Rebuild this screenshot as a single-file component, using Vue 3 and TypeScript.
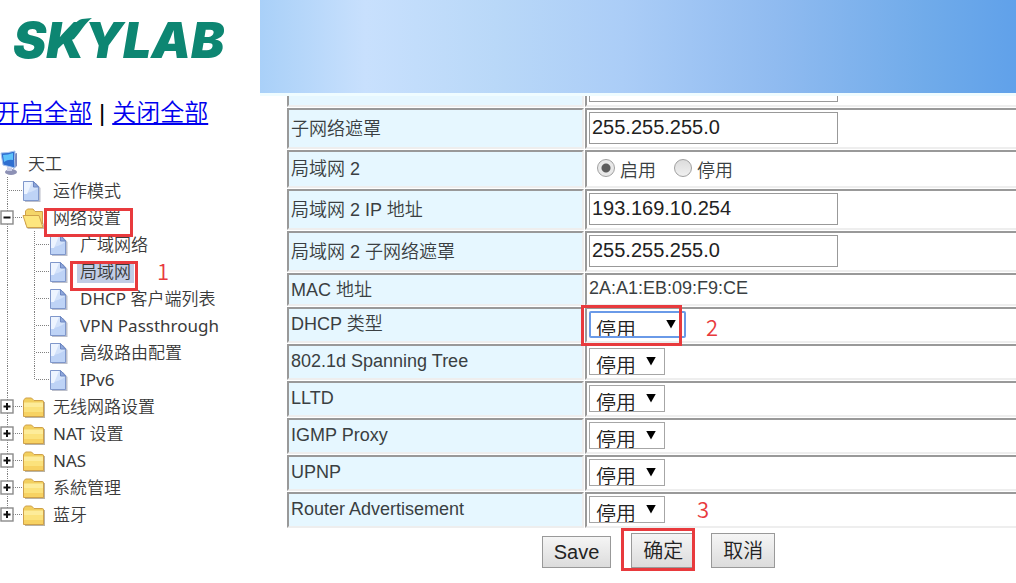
<script setup lang="ts">
import { ref } from 'vue'

type Icon = 'page' | 'folder' | 'open'

interface TreeRow {
  label: string
  level: 1 | 2
  icon: Icon
  toggle?: 'plus' | 'minus'
  last?: boolean
  selected?: boolean
  step?: string
  marked?: boolean
}

interface Option {
  id: string
  label: string
  value: string
  focused?: boolean
  step?: string
}

const tree: TreeRow[] = [
  { label: '运作模式', level: 1, icon: 'page' },
  { label: '网络设置', level: 1, icon: 'open', toggle: 'minus', marked: true },
  { label: '广域网络', level: 2, icon: 'page' },
  { label: '局域网', level: 2, icon: 'page', selected: true, marked: true, step: '1' },
  { label: 'DHCP 客户端列表', level: 2, icon: 'page' },
  { label: 'VPN Passthrough', level: 2, icon: 'page' },
  { label: '高级路由配置', level: 2, icon: 'page' },
  { label: 'IPv6', level: 2, icon: 'page', last: true },
  { label: '无线网路设置', level: 1, icon: 'folder', toggle: 'plus' },
  { label: 'NAT 设置', level: 1, icon: 'folder', toggle: 'plus' },
  { label: 'NAS', level: 1, icon: 'folder', toggle: 'plus' },
  { label: '系統管理', level: 1, icon: 'folder', toggle: 'plus' },
  { label: '蓝牙', level: 1, icon: 'folder', toggle: 'plus', last: true },
]

const ip = ref('')
const mask = ref('255.255.255.0')
const lan2 = ref('on')
const lan2Ip = ref('193.169.10.254')
const lan2Mask = ref('255.255.255.0')

const options = ref<Option[]>([
  { id: 'dhcp', label: 'DHCP 类型', value: '停用', focused: true, step: '2' },
  { id: 'stp', label: '802.1d Spanning Tree', value: '停用' },
  { id: 'lltd', label: 'LLTD', value: '停用' },
  { id: 'igmp', label: 'IGMP Proxy', value: '停用' },
  { id: 'upnp', label: 'UPNP', value: '停用' },
  { id: 'radv', label: 'Router Advertisement', value: '停用', step: '3' },
])
</script>

<template>
  <div class="page">
    <aside class="side">
      <div class="brand">
        <svg width="250" height="93" viewBox="0 0 250 93" role="img" aria-label="SKYLAB">
          <text class="logo" x="13" y="58">SKYLAB</text>
          <path d="M62 44 C70 29 76 20 82 19 L92 18 C85 23 82 30 74 39 Z" fill="#0d8672" />
        </svg>
      </div>
      <div class="all-links"><a href="#open">开启全部</a><span>|</span><a href="#close">关闭全部</a></div>

      <nav class="tree">
        <div class="row root">
          <svg class="pc" width="20" height="27" viewBox="0 0 20 27" aria-hidden="true">
            <ellipse cx="11" cy="22" rx="6" ry="3" fill="#8d91b5" />
            <path d="M13 4 L17 3 V16 L13 19 Z" fill="#7b87b8" />
            <path d="M1 3 Q8 3 15 1 Q14 9 15 18 L3 15 Z" fill="#2f6fd0" stroke="#a9c4ee" />
            <path d="M3 5 Q8 5 13 3 V10 Q8 9 4 12 Z" fill="#5fc3fa" />
            <path d="M7 17 L12 18 L12 21 L7 21 Z" fill="#c9cde6" />
          </svg>
          <a href="#root">天工</a>
        </div>
        <div v-for="r in tree" :key="r.label" class="row">
          <svg v-if="r.level === 2" width="27" height="27" aria-hidden="true">
            <path class="dots" d="M7.5 0 V27" />
          </svg>
          <svg width="22" height="27" viewBox="0 0 22 27" aria-hidden="true">
            <path class="dots" :d="r.last ? 'M7.5 0 V14' : 'M7.5 0 V27'" />
            <path class="dots" d="M9 13.5 H22" />
            <template v-if="r.toggle">
              <rect x="1" y="7" width="12" height="13" fill="#fff" stroke="#8a8a8a" stroke-width="1.4" />
              <path d="M3.500 13.5 H10.500" stroke="#111" stroke-width="2" />
              <path v-if="r.toggle === 'plus'" d="M7 10 V17" stroke="#111" stroke-width="2" />
            </template>
          </svg>
          <svg v-if="r.icon === 'page'" class="ico" width="24" height="27" viewBox="0 0 24 27" aria-hidden="true">
            <path d="M3 6 H14 L18.500 11 V25 H3 Z" fill="#8f95a8" opacity=".6" />
            <path d="M1.500 4.500 H11.500 L16.500 10 V23.500 H1.500 Z" fill="#d3e2fa" stroke="#7f97cb" />
            <path d="M2 16 Q10 16 16 11 V23 H2 Z" fill="#bed3f6" />
            <path d="M2 5 H10 L5 17 H2 Z" fill="#edf4ff" />
            <path d="M11.500 4.500 V10 H16.500 Z" fill="#8fa8dc" stroke="#6d87c2" />
          </svg>
          <svg v-else-if="r.icon === 'folder'" class="ico" width="24" height="27" viewBox="0 0 24 27" aria-hidden="true">
            <path d="M3 9 H23 V25 H3 Z" fill="#8b8168" opacity=".6" />
            <path d="M1.500 8 Q1.500 7 3.500 5 H9.500 L12 7.500 H20.500 Q21.500 7.500 21.500 9 V23.500 H1.500 Z" fill="#f2cf5e" stroke="#cfa14a" />
            <path d="M2 9.500 H21 V16 H2 Z" fill="#fdec9a" />
            <path d="M2 14 H21 V19 H2 Z" fill="#fbe27c" />
            <path d="M2 19 H21 V23 H2 Z" fill="#f7d262" />
          </svg>
          <svg v-else class="ico" width="24" height="27" viewBox="0 0 24 27" aria-hidden="true">
            <path d="M4 23 H20 L23 16 V25 H6 Z" fill="#8b8168" opacity=".5" />
            <path d="M3.500 20 V7 L5.500 5 H11 L13 7.500 H20.500 V20 Z" fill="#f4d568" stroke="#cfa14a" />
            <path d="M1 11.500 H17 L21 23.500 H5 Z" fill="#fde67e" stroke="#cfa14a" />
          </svg>
          <span class="item">
            <a href="#item" :class="{ selected: r.selected }">{{ r.label }}</a>
            <i v-if="r.marked" class="mark" :class="r.level === 2 ? 'mark-lan' : 'mark-net'"></i>
            <b v-if="r.step" class="step step-tree">{{ r.step }}</b>
          </span>
        </div>
      </nav>
    </aside>

    <main class="main">
      <header class="banner"></header>
      <div class="pane">
        <table>
          <colgroup>
            <col class="col-name" />
            <col />
          </colgroup>
          <tbody>
            <tr class="tall">
              <th></th>
              <td><input v-model="ip" type="text" aria-label="IP" /></td>
            </tr>
            <tr class="tall">
              <th><label for="mask">子网络遮罩</label></th>
              <td><input id="mask" v-model="mask" type="text" /></td>
            </tr>
            <tr class="mid">
              <th>局域网 2</th>
              <td>
                <div class="radios">
                  <label><input v-model="lan2" type="radio" name="lan2" value="on" /><span>启用</span></label>
                  <label><input v-model="lan2" type="radio" name="lan2" value="off" /><span>停用</span></label>
                </div>
              </td>
            </tr>
            <tr class="tall">
              <th><label for="lan2ip">局域网 2 IP 地址</label></th>
              <td><input id="lan2ip" v-model="lan2Ip" type="text" /></td>
            </tr>
            <tr class="tall">
              <th><label for="lan2mask">局域网 2 子网络遮罩</label></th>
              <td><input id="lan2mask" v-model="lan2Mask" type="text" /></td>
            </tr>
            <tr class="short">
              <th>MAC 地址</th>
              <td class="mac">2A:A1:EB:09:F9:CE</td>
            </tr>
            <tr v-for="o in options" :key="o.id" class="pick">
              <th><label :for="o.id">{{ o.label }}</label></th>
              <td>
                <div class="select" :class="{ focused: o.focused }">
                  <select :id="o.id" v-model="o.value">
                    <option>停用</option>
                  </select>
                  <i v-if="o.focused" class="mark mark-dhcp"></i>
                  <b v-if="o.step" class="step" :class="'step-' + o.step">{{ o.step }}</b>
                </div>
              </td>
            </tr>
          </tbody>
        </table>
      </div>
      <div class="actions">
        <button type="button" class="save">Save</button>
        <span class="ok"><button type="button">确定</button><i class="mark mark-ok"></i></span>
        <button type="button">取消</button>
      </div>
    </main>
  </div>
</template>

<style>
body {
  margin: 0;
  background: #fff;
  overflow: hidden;
}
</style>

<style scoped>
.page {
  display: flex;
  min-height: 100vh;
  overflow: hidden;
  font-family: "Liberation Sans", "Noto Sans CJK SC DemiLight", "Noto Sans CJK SC", sans-serif;
  color: #3a3f42;
}
.side {
  flex: 0 0 260px;
}
.brand {
  height: 93px;
}
.brand svg {
  display: block;
}
.logo {
  font: italic 900 50px Inter, "Liberation Sans", sans-serif;
  fill: #0d8672;
}
.all-links {
  margin-left: -4px;
  height: 40px;
  line-height: 40px;
  font-size: 24px;
  color: #000;
  white-space: nowrap;
}
.all-links a {
  color: #00e;
}
.all-links span {
  padding: 0 7px;
}
.tree {
  margin-top: 17px;
  font-family: "Noto Sans", "Noto Sans CJK SC DemiLight", "Noto Sans CJK SC", sans-serif;
  font-size: 17px;
}
.row {
  display: flex;
  height: 27px;
  align-items: center;
  line-height: 22px;
  white-space: nowrap;
}
.row svg {
  flex: none;
}
.row a {
  color: #3a3a3a;
  text-decoration: none;
}
.root .pc {
  margin-right: 8px;
}
.ico {
  margin-right: 4px;
}
.item {
  position: relative;
}
.row .item a {
  display: block;
  padding: 0 3px;
}
.row a.selected {
  background: #c1cde5;
}
.dots {
  fill: none;
  stroke: #808080;
  stroke-dasharray: 1 1;
}

.mark {
  position: absolute;
  box-sizing: border-box;
  border: 3px solid #e83a3d;
  pointer-events: none;
}
.mark-net {
  left: -6px;
  top: 1px;
  width: 89px;
  height: 29px;
}
.mark-lan {
  left: -7px;
  top: 0;
  width: 68px;
  height: 30px;
}
.mark-dhcp {
  left: -8px;
  top: -6px;
  width: 101px;
  height: 41px;
}
.mark-ok {
  left: -10px;
  top: -5px;
  width: 74px;
  height: 43px;
}
.step {
  position: absolute;
  font: 400 22px/24px "Noto Sans CJK SC DemiLight", "Noto Sans CJK SC", sans-serif;
  color: #e83a3d;
}
.step-tree {
  left: 80px;
  top: -3px;
}
.step-2 {
  left: 117px;
  top: 3px;
}
.step-3 {
  left: 108px;
  top: 0;
}

.main {
  flex: 1;
  min-width: 0;
}
.banner {
  height: 93px;
  border-bottom: 3px solid #effcff;
  background: linear-gradient(90deg, #a9d0f8 0%, #c8e0fd 14%, #b9d8f8 31%, #abcdf7 48%, #90bbf0 68%, #70abea 88%, #60a1ea 100%);
}
.pane {
  padding-left: 26px;
  overflow: hidden;
}
table {
  margin: -31px 0 -1px;
  width: calc(100% + 12px);
  table-layout: fixed;
  border-collapse: separate;
  border-spacing: 1px;
  font-size: 18px;
  line-height: 22px;
}
.col-name {
  width: 297px;
}
th,
td {
  box-sizing: border-box;
  padding: 0 2px;
  border: 2px solid;
  border-color: #999 #eee #eee #999;
  text-align: left;
  vertical-align: middle;
  font-weight: 400;
}
td,
.pick th {
  padding-bottom: 2px;
}
th {
  background: #e6f7ff;
}
.tall > * {
  height: 41px;
}
.mid > * {
  height: 38px;
}
.short > * {
  height: 33px;
}
.pick > * {
  height: 36px;
}
td.mac {
  padding-bottom: 4px;
}
input[type="text"] {
  display: block;
  box-sizing: border-box;
  width: 249px;
  height: 32px;
  margin: 0;
  padding: 0 2px;
  border: 1px solid #999;
  font: 20px "Liberation Sans", sans-serif;
  color: #222;
  background: #fff;
}
.radios {
  display: flex;
  gap: 18px;
  padding-left: 8px;
}
.radios label {
  display: flex;
  align-items: center;
  gap: 5px;
}
.radios span {
  padding-top: 6px;
}
.radios input {
  appearance: none;
  width: 18px;
  height: 18px;
  margin: 0;
  border: 1px solid #a0a0a0;
  border-radius: 50%;
  background: linear-gradient(#dcdcdc, #f0f0f0);
}
.radios input:checked {
  background: radial-gradient(circle, #5c5c5c 0 4px, #e8e8e8 5px);
}
.select {
  position: relative;
  width: 76px;
  height: 27px;
}
.select::after {
  content: "";
  position: absolute;
  right: 9px;
  top: 9px;
  width: 10px;
  height: 9px;
  background: #000;
  clip-path: polygon(0 0, 100% 0, 50% 100%);
  pointer-events: none;
}
select {
  appearance: none;
  display: block;
  box-sizing: border-box;
  width: 100%;
  height: 100%;
  margin: 0;
  padding: 7px 0 0 6px;
  border: 1px solid #a6a6a6;
  border-radius: 0;
  background: #fff;
  font: 400 20px/20px "Liberation Sans", "Noto Sans CJK SC DemiLight", "Noto Sans CJK SC", sans-serif;
  color: #222;
}
.focused {
  width: 97px;
}
.focused::after {
  right: 10px;
}
.focused select {
  border: 2px solid #6a9ae8;
  border-radius: 2px;
  padding-left: 5px;
}
.actions {
  display: flex;
  justify-content: center;
  align-items: flex-end;
  gap: 16px;
  padding: 5px 0 12px 41px;
}
.ok {
  position: relative;
  margin-left: 4px;
}
button {
  display: block;
  box-sizing: border-box;
  height: 35px;
  padding: 0 11px;
  border: 1px solid #999;
  background: linear-gradient(#f5f5f5, #dcdcdc);
  font: 400 20px/30px "Liberation Sans", "Noto Sans CJK SC DemiLight", "Noto Sans CJK SC", sans-serif;
  color: #222;
}
.save {
  height: 32px;
}
</style>
